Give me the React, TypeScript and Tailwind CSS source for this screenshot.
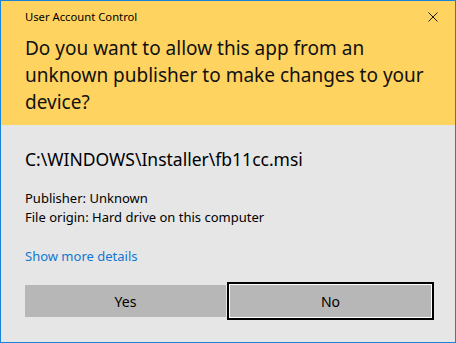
import React from 'react';

const font = { fontFamily: '"Noto Sans", "Open Sans", sans-serif' };

const CloseIcon: React.FC = () => (
  <svg width="10" height="10" viewBox="0 0 10 10" className="block">
    <path d="M0.5 0.5 L9.5 9.5 M9.5 0.5 L0.5 9.5" stroke="#1a1a1a" strokeWidth="1" fill="none" />
  </svg>
);

const App: React.FC = () => {
  return (
    <div className="w-[456px] h-[343px] border border-[#1883d7] flex flex-col text-black" style={font}>
      {/* yellow header */}
      <div className="h-[124px] bg-[#ffd35f] pl-6">
        <div className="h-8 flex items-center justify-between pr-[17px]">
          <span className="text-[11.25px] leading-none">User Account Control</span>
          <CloseIcon />
        </div>
        <h1 className="mt-[2px] text-[19px] leading-[27px] pr-6 text-[#111]">
          Do you want to allow this app from an unknown publisher to make changes to your device?
        </h1>
      </div>

      {/* body */}
      <div className="flex-1 bg-[#e6e6e6] px-6 pt-6 flex flex-col">
        <div className="text-[17.5px] leading-5">C:\WINDOWS\Installer\fb11cc.msi</div>
        <div className="mt-5 text-[13px] leading-[19px]">
          <div>Publisher: Unknown</div>
          <div>File origin: Hard drive on this computer</div>
        </div>
        <a className="mt-5 text-[13px] leading-[19px] text-[#1077d2] cursor-pointer">Show more details</a>
        <div className="mt-[19px] flex gap-1">
          <button className="w-[201px] h-8 bg-[#b7b7b7] text-[14px]">Yes</button>
          <button className="w-[201px] h-8 bg-[#b7b7b7] text-[14px] shadow-[0_0_0_1px_#ffffff,0_0_0_3px_#000000]">
            No
          </button>
        </div>
      </div>
    </div>
  );
};

export default App;
